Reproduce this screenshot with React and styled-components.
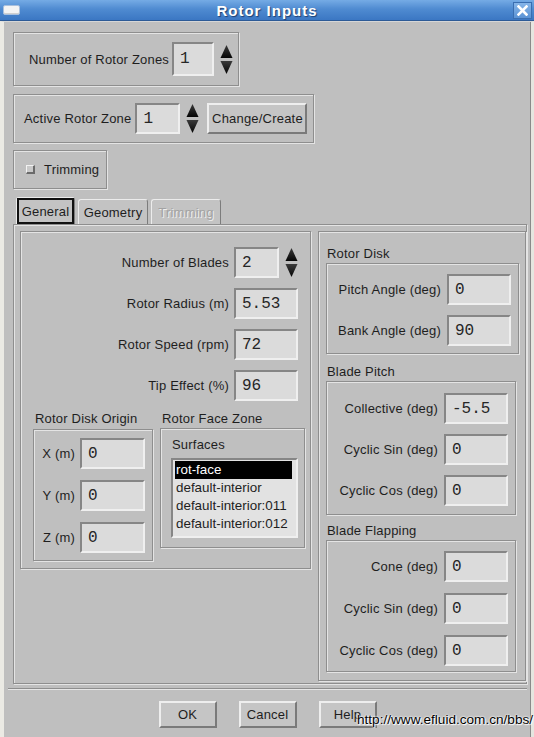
import React from "react";
import styled, { createGlobalStyle } from "styled-components";

const GlobalStyle = createGlobalStyle`
  html, body { margin: 0; padding: 0; background: #bfbfbf; }
  body { font-family: "Liberation Sans", Arial, Helvetica, sans-serif; }
  * { box-sizing: border-box; }
`;

const Window = styled.div`
  position: relative;
  width: 534px;
  height: 737px;
  display: flex;
  flex-direction: column;
  background: #bfbfbf;
  overflow: hidden;
`;

const TitleBar = styled.div`
  flex: none;
  height: 21px;
  display: grid;
  grid-template-columns: 30px 1fr 30px;
  align-items: center;
  background: linear-gradient(#75abe5 0%, #4f8bd1 45%, #3b77c3 100%);
  border-bottom: 1px solid #2c5a96;
`;

const WinIcon = styled.span`
  justify-self: start;
  margin-left: 3px;
  width: 17px;
  height: 10px;
  background: #f4f4f4;
  border: 1px solid #a9c0dd;
  border-radius: 2px;
  box-shadow: inset 0 -1px 0 #cfcfcf;
`;

const Title = styled.div`
  text-align: center;
  color: #ffffff;
  font-weight: bold;
  font-size: 15px;
  letter-spacing: 1px;
  text-shadow: 1px 1px 1px #1d3f70;
`;

const CloseBox = styled.span`
  justify-self: end;
  margin-right: 2px;
  width: 19px;
  height: 17px;
  display: flex;
  align-items: center;
  justify-content: center;
  background: linear-gradient(#86b5e8, #5b93d5);
  border: 1px solid #3a6eb0;
`;

const Body = styled.div`
  flex: 1;
  display: flex;
  flex-direction: column;
  align-items: flex-start;
  padding: 10px 4px 0 9px;
  border-top: 1px solid #d6d6d6;
  border-left: 4px solid #ebeae4;
  border-right: 3px solid #e6e6e0;
  box-shadow: inset -1px 0 0 #8a8a8a;
`;

const Groove = styled.div`
  flex: none;
  border: 1px solid #8e8e8e;
  box-shadow: inset 1px 1px 0 #e4e4e4, 1px 1px 0 #e4e4e4;
`;

const TopFrame = styled(Groove)`
  width: ${(p) => p.$w}px;
  height: ${(p) => p.$h}px;
  margin-top: ${(p) => p.$mt || 0}px;
  padding-left: ${(p) => p.$pl}px;
  display: flex;
  align-items: center;
  gap: ${(p) => p.$gap}px;
`;

const Label = styled.span`
  font-size: 13px;
  letter-spacing: 0.2px;
  color: #1e1e1e;
  white-space: nowrap;
`;

const Field = styled.div`
  flex: none;
  width: ${(p) => p.$w}px;
  height: ${(p) => p.$h || 31}px;
  display: flex;
  align-items: center;
  padding-left: 6px;
  background: #dbdbdb;
  border-style: solid;
  border-width: 2px;
  border-color: #868686 #efefef #efefef #868686;
  font-family: "Liberation Mono", "DejaVu Sans Mono", monospace;
  font-size: 16px;
  color: #262626;
`;

const SpinSvg = styled.svg`
  flex: none;
  margin-left: ${(p) => p.$ml || 0}px;
`;

const Spinner = ({ ml }) => (
  <SpinSvg $ml={ml} width="13" height="31" viewBox="0 0 13 31">
    <defs>
      <linearGradient id="sg" x1="0" y1="0" x2="0" y2="1">
        <stop offset="0" stopColor="#3a3a3a" />
        <stop offset="1" stopColor="#050505" />
      </linearGradient>
    </defs>
    <polygon points="6.5,1 0.5,14 12.5,14" fill="url(#sg)" />
    <polygon points="0.5,17 12.5,17 6.5,30" fill="url(#sg)" />
  </SpinSvg>
);

const Button = styled.button`
  flex: none;
  width: ${(p) => p.$w}px;
  height: ${(p) => p.$h}px;
  margin-left: ${(p) => p.$ml || 0}px;
  padding: 0;
  background: #c5c5c5;
  border-style: solid;
  border-width: 2px;
  border-color: #eeeeee #7a7a7a #7a7a7a #eeeeee;
  font-family: inherit;
  font-size: 13px;
  letter-spacing: 0.2px;
  color: #1e1e1e;
`;

const Check = styled.span`
  flex: none;
  width: 9px;
  height: 9px;
  background: #c9c9c9;
  border-style: solid;
  border-width: 1px 2px 2px 1px;
  border-color: #f2f2f2 #6a6a6a #6a6a6a #f2f2f2;
`;

const TabBar = styled.div`
  display: flex;
  align-items: flex-end;
  margin: 8px 0 0 3px;
  gap: 3px;
  height: 27px;
`;

const Tab = styled.div`
  width: ${(p) => p.$w}px;
  height: ${(p) => (p.$active ? 27 : 25)}px;
  display: flex;
  align-items: center;
  justify-content: center;
  background: #c3c3c3;
  border-style: solid;
  border-width: 1px 1px 0 1px;
  border-color: #ececec #7c7c7c #7c7c7c #ececec;
  border-radius: 3px 3px 0 0;
  font-size: 13px;
  letter-spacing: 0.2px;
  color: ${(p) => (p.$disabled ? "#a2a2a2" : "#1e1e1e")};
  text-shadow: ${(p) => (p.$disabled ? "1px 1px 0 #eeeeee" : "none")};
`;

const Focus = styled.span`
  align-self: stretch;
  flex: 1;
  display: flex;
  align-items: center;
  justify-content: center;
  border: 2px solid #111111;
`;

const TabPage = styled(Groove)`
  width: 514px;
  height: 460px;
  display: flex;
  align-items: flex-start;
  gap: 7px;
  padding: 6px 0 0 6px;
`;

const Panel = styled(Groove)`
  width: ${(p) => p.$w}px;
  height: ${(p) => p.$h}px;
  display: flex;
  flex-direction: column;
  padding: ${(p) => p.$pad};
`;

const Rows = styled.div`
  display: flex;
  flex-direction: column;
  align-items: flex-end;
  gap: 10px;
`;

const Row = styled.div`
  display: flex;
  align-items: center;
  justify-content: flex-end;
  gap: ${(p) => p.$gap || 5}px;
`;

const GroupRow = styled.div`
  display: flex;
  align-items: flex-start;
  gap: 7px;
  margin-top: 10px;
`;

const Group = styled.div`
  display: flex;
  flex-direction: column;
  gap: ${(p) => p.$gap || 2}px;
  margin-top: ${(p) => p.$mt || 0}px;
`;

const Caption = styled.span`
  font-size: 13px;
  letter-spacing: 0.2px;
  line-height: 15px;
  color: #1e1e1e;
  padding-left: ${(p) => p.$pl || 1}px;
  white-space: nowrap;
`;

const FieldFrame = styled(Groove)`
  width: ${(p) => p.$w}px;
  height: ${(p) => p.$h}px;
  display: flex;
  flex-direction: column;
  align-items: flex-end;
  gap: ${(p) => p.$gap}px;
  padding: ${(p) => p.$pt}px 7px 0 0;
`;

const ZoneFrame = styled(Groove)`
  width: 145px;
  height: 120px;
  display: flex;
  flex-direction: column;
  padding: 8px 0 0 10px;
`;

const ListBox = styled.div`
  margin-top: 6px;
  width: 127px;
  height: 80px;
  padding: 1px 4px 1px 2px;
  background: #e2e2e2;
  border-style: solid;
  border-width: 2px;
  border-color: #868686 #efefef #efefef #868686;
  overflow: hidden;
`;

const ListItem = styled.div`
  height: 18px;
  line-height: 18px;
  padding-left: 1px;
  font-size: 13.4px;
  white-space: nowrap;
  color: ${(p) => (p.$sel ? "#ffffff" : "#1e1e1e")};
  background: ${(p) => (p.$sel ? "#000000" : "transparent")};
`;

const Separator = styled.div`
  width: 519px;
  height: 2px;
  margin: 4px 0 0 -5px;
  border-top: 1px solid #8e8e8e;
  border-bottom: 1px solid #e6e6e6;
`;

const ButtonRow = styled.div`
  align-self: stretch;
  display: flex;
  justify-content: center;
  gap: 22px;
  margin: 11px -4px 0 -9px;
`;

const Watermark = styled.span`
  position: absolute;
  left: 357px;
  top: 712px;
  font-size: 13.6px;
  color: #000000;
  white-space: nowrap;
  text-shadow: 0 0 2px #ffffff, 0 0 2px #ffffff, 1px 1px 1px #ffffff;
`;

const FormRow = ({ label, value, w = 64, gap = 6 }) => (
  <Row $gap={gap}>
    <Label>{label}</Label>
    <Field $w={w}>{value}</Field>
  </Row>
);

export default function App() {
  return (
    <>
      <GlobalStyle />
      <Window>
        <TitleBar>
          <WinIcon />
          <Title>Rotor Inputs</Title>
          <CloseBox>
            <svg width="11" height="11" viewBox="0 0 11 11">
              <path d="M1.5 1.5 L9.5 9.5 M9.5 1.5 L1.5 9.5" stroke="#ffffff" strokeWidth="2.6" strokeLinecap="square" />
            </svg>
          </CloseBox>
        </TitleBar>
        <Body>
          <TopFrame $w={226} $h={54} $pl={15} $gap={3}>
            <Label>Number of Rotor Zones</Label>
            <Field $w={42} $h={34}>1</Field>
            <Spinner ml={3} />
          </TopFrame>
          <TopFrame $w={301} $h={49} $pl={10} $gap={4} $mt={8}>
            <Label>Active Rotor Zone</Label>
            <Field $w={45}>1</Field>
            <Spinner ml={2} />
            <Button $w={100} $h={31} $ml={4}>Change/Create</Button>
          </TopFrame>
          <TopFrame $w={94} $h={39} $pl={12} $gap={9} $mt={7}>
            <Check />
            <Label>Trimming</Label>
          </TopFrame>
          <TabBar>
            <Tab $w={59} $active>
              <Focus>General</Focus>
            </Tab>
            <Tab $w={70}>Geometry</Tab>
            <Tab $w={70} $disabled>Trimming</Tab>
          </TabBar>
          <TabPage>
            <Panel $w={291} $h={338} $pad="15px 12px 0 12px">
              <Rows>
                <Row>
                  <Label>Number of Blades</Label>
                  <Field $w={45}>2</Field>
                  <Spinner ml={1} />
                </Row>
                <FormRow label="Rotor Radius (m)" value="5.53" gap={5} />
                <FormRow label="Rotor Speed (rpm)" value="72" gap={5} />
                <FormRow label="Tip Effect (%)" value="96" gap={5} />
              </Rows>
              <GroupRow>
                <Group $gap={3}>
                  <Caption $pl={2}>Rotor Disk Origin</Caption>
                  <FieldFrame $w={120} $h={132} $gap={11} $pt={8}>
                    <FormRow label="X (m)" value="0" w={65} gap={5} />
                    <FormRow label="Y (m)" value="0" w={65} gap={5} />
                    <FormRow label="Z (m)" value="0" w={65} gap={5} />
                  </FieldFrame>
                </Group>
                <Group $gap={2}>
                  <Caption $pl={2}>Rotor Face Zone</Caption>
                  <ZoneFrame>
                    <Caption>Surfaces</Caption>
                    <ListBox>
                      <ListItem $sel>rot-face</ListItem>
                      <ListItem>default-interior</ListItem>
                      <ListItem>default-interior:011</ListItem>
                      <ListItem>default-interior:012</ListItem>
                    </ListBox>
                  </ZoneFrame>
                </Group>
              </GroupRow>
            </Panel>
            <Panel $w={208} $h={450} $pad="14px 0 0 7px">
              <Group>
                <Caption>Rotor Disk</Caption>
                <FieldFrame $w={193} $h={91} $gap={10} $pt={10}>
                  <FormRow label="Pitch Angle (deg)" value="0" />
                  <FormRow label="Bank Angle (deg)" value="90" />
                </FieldFrame>
              </Group>
              <Group $mt={10}>
                <Caption>Blade Pitch</Caption>
                <FieldFrame $w={190} $h={134} $gap={10} $pt={11}>
                  <FormRow label="Collective (deg)" value="-5.5" />
                  <FormRow label="Cyclic Sin (deg)" value="0" />
                  <FormRow label="Cyclic Cos (deg)" value="0" />
                </FieldFrame>
              </Group>
              <Group $mt={8}>
                <Caption>Blade Flapping</Caption>
                <FieldFrame $w={190} $h={132} $gap={11} $pt={10}>
                  <FormRow label="Cone (deg)" value="0" />
                  <FormRow label="Cyclic Sin (deg)" value="0" />
                  <FormRow label="Cyclic Cos (deg)" value="0" />
                </FieldFrame>
              </Group>
            </Panel>
          </TabPage>
          <Separator />
          <ButtonRow>
            <Button $w={58} $h={27}>OK</Button>
            <Button $w={58} $h={27}>Cancel</Button>
            <Button $w={58} $h={27}>Help</Button>
          </ButtonRow>
        </Body>
        <Watermark>http://www.efluid.com.cn/bbs/</Watermark>
      </Window>
    </>
  );
}
